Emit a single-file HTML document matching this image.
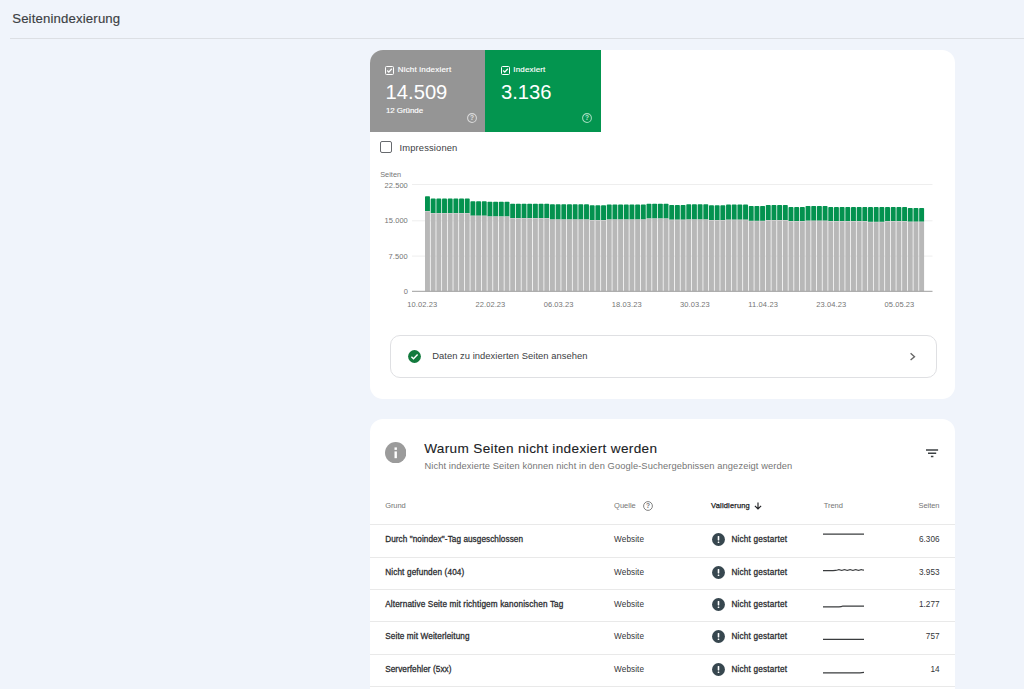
<!DOCTYPE html>
<html lang="de"><head><meta charset="utf-8"><title>Seitenindexierung</title>
<style>
html,body{margin:0;padding:0}
body{width:1024px;height:689px;overflow:hidden;background:#f0f4fb;font-family:"Liberation Sans",sans-serif;position:relative;color:#202124}
div,svg{position:absolute}
.t{white-space:nowrap}
#hr{left:10px;top:38px;width:1014px;height:1px;background:#dcdfe4}
.card{background:#fff;border-radius:13px;left:370px;width:585px}
#c1{top:49.6px;height:349px}
#c2{top:418.8px;height:300px}
.tile{top:49.6px;height:82px}
#t1{left:370px;width:115.4px;background:#959595;border-top-left-radius:13px}
#t2{left:485.4px;width:115.6px;background:#03954f}
.rline{left:370px;width:585px;height:1px;background:#e9e9e9}
.excl{left:712px}
.trend{left:823.2px}
</style></head><body>
<div class="t" style="font-size:13.2px;line-height:13.2px;top:12.00px;color:#3c4043;left:12.20px;letter-spacing:0.151px;-webkit-text-stroke:0.15px #3c4043;">Seitenindexierung</div>
<div id="hr"></div>

<div class="card" id="c1"></div>
<div class="tile" id="t1"></div>
<div class="tile" id="t2"></div>

<svg style="left:385px;top:65.9px" width="9" height="9" viewBox="0 0 9 9"><rect x=".5" y=".5" width="8" height="8" rx="1" fill="none" stroke="#fff" stroke-width="1"/><path d="M2.2 4.5l1.6 1.6 3-3.3" fill="none" stroke="#fff" stroke-width="1.3"/></svg>
<div class="t" style="font-size:8px;line-height:8px;top:66.00px;color:#fff;left:397.70px;letter-spacing:0.201px;-webkit-text-stroke:0.15px #fff;">Nicht indexiert</div>
<div class="t" style="font-size:20.2px;line-height:20.2px;top:82.00px;color:#fff;left:385.60px;">14.509</div>
<div class="t" style="font-size:8px;line-height:8px;top:107.00px;color:#fff;left:385.90px;letter-spacing:-0.077px;-webkit-text-stroke:0.15px #fff;">12 Gründe</div>
<svg style="left:466.9px;top:112.9px" width="10" height="10" viewBox="0 0 10 10"><circle cx="5" cy="5" r="4.4" fill="none" stroke="#dadada" stroke-width="1.05"/><text x="5" y="7.4" font-size="6.6" text-anchor="middle" fill="#e2e2e2" font-weight="bold" font-family="Liberation Sans">?</text></svg>

<svg style="left:500.9px;top:65.9px" width="9" height="9" viewBox="0 0 9 9"><rect x=".5" y=".5" width="8" height="8" rx="1" fill="none" stroke="#fff" stroke-width="1"/><path d="M2.2 4.5l1.6 1.6 3-3.3" fill="none" stroke="#fff" stroke-width="1.3"/></svg>
<div class="t" style="font-size:8px;line-height:8px;top:66.00px;color:#fff;left:513.30px;letter-spacing:0.164px;-webkit-text-stroke:0.15px #fff;">Indexiert</div>
<div class="t" style="font-size:20.2px;line-height:20.2px;top:82.00px;color:#fff;left:501.00px;">3.136</div>
<svg style="left:582.4px;top:112.9px" width="10" height="10" viewBox="0 0 10 10"><circle cx="5" cy="5" r="4.4" fill="none" stroke="#a4dbbf" stroke-width="1.05"/><text x="5" y="7.4" font-size="6.6" text-anchor="middle" fill="#b9e4ce" font-weight="bold" font-family="Liberation Sans">?</text></svg>

<div style="left:380.2px;top:141.2px;width:9.7px;height:9.7px;border:1.5px solid #676a6e;border-radius:2px"></div>
<div class="t" style="font-size:9.4px;line-height:9.4px;top:143.00px;color:#3c4043;left:399.50px;letter-spacing:0.138px;">Impressionen</div>

<div class="t" style="font-size:7.3px;line-height:7.3px;top:171.00px;color:#757575;left:380.20px;letter-spacing:0.039px;">Seiten</div>
<div class="t" style="font-size:7.5px;line-height:7.5px;top:182.00px;color:#757575;left:384.60px;letter-spacing:0.049px;">22.500</div><div class="t" style="font-size:7.5px;line-height:7.5px;top:217.00px;color:#757575;left:384.60px;letter-spacing:0.049px;">15.000</div><div class="t" style="font-size:7.5px;line-height:7.5px;top:253.00px;color:#757575;left:388.50px;letter-spacing:0.130px;">7.500</div><div class="t" style="font-size:7.5px;line-height:7.5px;top:288.00px;color:#757575;left:403.63px;">0</div>

<svg style="left:0;top:0" width="1024" height="320" viewBox="0 0 1024 320">
<g stroke="#eeeeee" stroke-width="1"><path d="M412 184.5H932.5M412 220.8H932.5M412 256.1H932.5"/></g>
<rect x="425.00" y="211.0" width="4.93" height="80.3" fill="#b8b8b8"/>
<rect x="425.00" y="211.0" width="4.93" height=".7" fill="#d2d2d2"/>
<path d="M425.00 211.0V197.1q0-.8 .8-.8h3.33q.8 0 .8 .8V211.0z" fill="#03924f"/>
<rect x="430.68" y="212.9" width="4.93" height="78.4" fill="#b8b8b8"/>
<rect x="430.68" y="212.9" width="4.93" height=".7" fill="#d2d2d2"/>
<path d="M430.68 212.9V199.4q0-.8 .8-.8h3.33q.8 0 .8 .8V212.9z" fill="#03924f"/>
<rect x="436.36" y="212.9" width="4.93" height="78.4" fill="#b8b8b8"/>
<rect x="436.36" y="212.9" width="4.93" height=".7" fill="#d2d2d2"/>
<path d="M436.36 212.9V199.4q0-.8 .8-.8h3.33q.8 0 .8 .8V212.9z" fill="#03924f"/>
<rect x="442.04" y="212.9" width="4.93" height="78.4" fill="#b8b8b8"/>
<rect x="442.04" y="212.9" width="4.93" height=".7" fill="#d2d2d2"/>
<path d="M442.04 212.9V199.4q0-.8 .8-.8h3.33q.8 0 .8 .8V212.9z" fill="#03924f"/>
<rect x="447.72" y="212.9" width="4.93" height="78.4" fill="#b8b8b8"/>
<rect x="447.72" y="212.9" width="4.93" height=".7" fill="#d2d2d2"/>
<path d="M447.72 212.9V199.4q0-.8 .8-.8h3.33q.8 0 .8 .8V212.9z" fill="#03924f"/>
<rect x="453.40" y="212.9" width="4.93" height="78.4" fill="#b8b8b8"/>
<rect x="453.40" y="212.9" width="4.93" height=".7" fill="#d2d2d2"/>
<path d="M453.40 212.9V199.4q0-.8 .8-.8h3.33q.8 0 .8 .8V212.9z" fill="#03924f"/>
<rect x="459.08" y="212.9" width="4.93" height="78.4" fill="#b8b8b8"/>
<rect x="459.08" y="212.9" width="4.93" height=".7" fill="#d2d2d2"/>
<path d="M459.08 212.9V199.4q0-.8 .8-.8h3.33q.8 0 .8 .8V212.9z" fill="#03924f"/>
<rect x="464.76" y="212.9" width="4.93" height="78.4" fill="#b8b8b8"/>
<rect x="464.76" y="212.9" width="4.93" height=".7" fill="#d2d2d2"/>
<path d="M464.76 212.9V199.4q0-.8 .8-.8h3.33q.8 0 .8 .8V212.9z" fill="#03924f"/>
<rect x="470.44" y="215.4" width="4.93" height="75.9" fill="#b8b8b8"/>
<rect x="470.44" y="215.4" width="4.93" height=".7" fill="#d2d2d2"/>
<path d="M470.44 215.4V202.0q0-.8 .8-.8h3.33q.8 0 .8 .8V215.4z" fill="#03924f"/>
<rect x="476.12" y="215.4" width="4.93" height="75.9" fill="#b8b8b8"/>
<rect x="476.12" y="215.4" width="4.93" height=".7" fill="#d2d2d2"/>
<path d="M476.12 215.4V202.0q0-.8 .8-.8h3.33q.8 0 .8 .8V215.4z" fill="#03924f"/>
<rect x="481.80" y="215.4" width="4.93" height="75.9" fill="#b8b8b8"/>
<rect x="481.80" y="215.4" width="4.93" height=".7" fill="#d2d2d2"/>
<path d="M481.80 215.4V202.0q0-.8 .8-.8h3.33q.8 0 .8 .8V215.4z" fill="#03924f"/>
<rect x="487.48" y="216.3" width="4.93" height="75.0" fill="#b8b8b8"/>
<rect x="487.48" y="216.3" width="4.93" height=".7" fill="#d2d2d2"/>
<path d="M487.48 216.3V202.6q0-.8 .8-.8h3.33q.8 0 .8 .8V216.3z" fill="#03924f"/>
<rect x="493.16" y="216.3" width="4.93" height="75.0" fill="#b8b8b8"/>
<rect x="493.16" y="216.3" width="4.93" height=".7" fill="#d2d2d2"/>
<path d="M493.16 216.3V202.6q0-.8 .8-.8h3.33q.8 0 .8 .8V216.3z" fill="#03924f"/>
<rect x="498.84" y="216.3" width="4.93" height="75.0" fill="#b8b8b8"/>
<rect x="498.84" y="216.3" width="4.93" height=".7" fill="#d2d2d2"/>
<path d="M498.84 216.3V202.6q0-.8 .8-.8h3.33q.8 0 .8 .8V216.3z" fill="#03924f"/>
<rect x="504.52" y="216.3" width="4.93" height="75.0" fill="#b8b8b8"/>
<rect x="504.52" y="216.3" width="4.93" height=".7" fill="#d2d2d2"/>
<path d="M504.52 216.3V202.6q0-.8 .8-.8h3.33q.8 0 .8 .8V216.3z" fill="#03924f"/>
<rect x="510.20" y="217.9" width="4.93" height="73.4" fill="#b8b8b8"/>
<rect x="510.20" y="217.9" width="4.93" height=".7" fill="#d2d2d2"/>
<path d="M510.20 217.9V204.5q0-.8 .8-.8h3.33q.8 0 .8 .8V217.9z" fill="#03924f"/>
<rect x="515.88" y="217.9" width="4.93" height="73.4" fill="#b8b8b8"/>
<rect x="515.88" y="217.9" width="4.93" height=".7" fill="#d2d2d2"/>
<path d="M515.88 217.9V204.5q0-.8 .8-.8h3.33q.8 0 .8 .8V217.9z" fill="#03924f"/>
<rect x="521.56" y="217.9" width="4.93" height="73.4" fill="#b8b8b8"/>
<rect x="521.56" y="217.9" width="4.93" height=".7" fill="#d2d2d2"/>
<path d="M521.56 217.9V204.5q0-.8 .8-.8h3.33q.8 0 .8 .8V217.9z" fill="#03924f"/>
<rect x="527.24" y="217.9" width="4.93" height="73.4" fill="#b8b8b8"/>
<rect x="527.24" y="217.9" width="4.93" height=".7" fill="#d2d2d2"/>
<path d="M527.24 217.9V204.5q0-.8 .8-.8h3.33q.8 0 .8 .8V217.9z" fill="#03924f"/>
<rect x="532.92" y="217.9" width="4.93" height="73.4" fill="#b8b8b8"/>
<rect x="532.92" y="217.9" width="4.93" height=".7" fill="#d2d2d2"/>
<path d="M532.92 217.9V204.5q0-.8 .8-.8h3.33q.8 0 .8 .8V217.9z" fill="#03924f"/>
<rect x="538.60" y="217.9" width="4.93" height="73.4" fill="#b8b8b8"/>
<rect x="538.60" y="217.9" width="4.93" height=".7" fill="#d2d2d2"/>
<path d="M538.60 217.9V204.5q0-.8 .8-.8h3.33q.8 0 .8 .8V217.9z" fill="#03924f"/>
<rect x="544.28" y="217.9" width="4.93" height="73.4" fill="#b8b8b8"/>
<rect x="544.28" y="217.9" width="4.93" height=".7" fill="#d2d2d2"/>
<path d="M544.28 217.9V204.5q0-.8 .8-.8h3.33q.8 0 .8 .8V217.9z" fill="#03924f"/>
<rect x="549.96" y="219.2" width="4.93" height="72.1" fill="#b8b8b8"/>
<rect x="549.96" y="219.2" width="4.93" height=".7" fill="#d2d2d2"/>
<path d="M549.96 219.2V205.1q0-.8 .8-.8h3.33q.8 0 .8 .8V219.2z" fill="#03924f"/>
<rect x="555.64" y="219.2" width="4.93" height="72.1" fill="#b8b8b8"/>
<rect x="555.64" y="219.2" width="4.93" height=".7" fill="#d2d2d2"/>
<path d="M555.64 219.2V205.1q0-.8 .8-.8h3.33q.8 0 .8 .8V219.2z" fill="#03924f"/>
<rect x="561.32" y="219.2" width="4.93" height="72.1" fill="#b8b8b8"/>
<rect x="561.32" y="219.2" width="4.93" height=".7" fill="#d2d2d2"/>
<path d="M561.32 219.2V205.1q0-.8 .8-.8h3.33q.8 0 .8 .8V219.2z" fill="#03924f"/>
<rect x="567.00" y="219.2" width="4.93" height="72.1" fill="#b8b8b8"/>
<rect x="567.00" y="219.2" width="4.93" height=".7" fill="#d2d2d2"/>
<path d="M567.00 219.2V205.1q0-.8 .8-.8h3.33q.8 0 .8 .8V219.2z" fill="#03924f"/>
<rect x="572.68" y="219.2" width="4.93" height="72.1" fill="#b8b8b8"/>
<rect x="572.68" y="219.2" width="4.93" height=".7" fill="#d2d2d2"/>
<path d="M572.68 219.2V205.1q0-.8 .8-.8h3.33q.8 0 .8 .8V219.2z" fill="#03924f"/>
<rect x="578.36" y="219.2" width="4.93" height="72.1" fill="#b8b8b8"/>
<rect x="578.36" y="219.2" width="4.93" height=".7" fill="#d2d2d2"/>
<path d="M578.36 219.2V205.1q0-.8 .8-.8h3.33q.8 0 .8 .8V219.2z" fill="#03924f"/>
<rect x="584.04" y="219.2" width="4.93" height="72.1" fill="#b8b8b8"/>
<rect x="584.04" y="219.2" width="4.93" height=".7" fill="#d2d2d2"/>
<path d="M584.04 219.2V205.1q0-.8 .8-.8h3.33q.8 0 .8 .8V219.2z" fill="#03924f"/>
<rect x="589.72" y="220.1" width="4.93" height="71.2" fill="#b8b8b8"/>
<rect x="589.72" y="220.1" width="4.93" height=".7" fill="#d2d2d2"/>
<path d="M589.72 220.1V206.0q0-.8 .8-.8h3.33q.8 0 .8 .8V220.1z" fill="#03924f"/>
<rect x="595.40" y="220.1" width="4.93" height="71.2" fill="#b8b8b8"/>
<rect x="595.40" y="220.1" width="4.93" height=".7" fill="#d2d2d2"/>
<path d="M595.40 220.1V206.0q0-.8 .8-.8h3.33q.8 0 .8 .8V220.1z" fill="#03924f"/>
<rect x="601.08" y="220.1" width="4.93" height="71.2" fill="#b8b8b8"/>
<rect x="601.08" y="220.1" width="4.93" height=".7" fill="#d2d2d2"/>
<path d="M601.08 220.1V206.0q0-.8 .8-.8h3.33q.8 0 .8 .8V220.1z" fill="#03924f"/>
<rect x="606.76" y="219.2" width="4.93" height="72.1" fill="#b8b8b8"/>
<rect x="606.76" y="219.2" width="4.93" height=".7" fill="#d2d2d2"/>
<path d="M606.76 219.2V205.4q0-.8 .8-.8h3.33q.8 0 .8 .8V219.2z" fill="#03924f"/>
<rect x="612.44" y="219.2" width="4.93" height="72.1" fill="#b8b8b8"/>
<rect x="612.44" y="219.2" width="4.93" height=".7" fill="#d2d2d2"/>
<path d="M612.44 219.2V205.4q0-.8 .8-.8h3.33q.8 0 .8 .8V219.2z" fill="#03924f"/>
<rect x="618.12" y="219.2" width="4.93" height="72.1" fill="#b8b8b8"/>
<rect x="618.12" y="219.2" width="4.93" height=".7" fill="#d2d2d2"/>
<path d="M618.12 219.2V205.4q0-.8 .8-.8h3.33q.8 0 .8 .8V219.2z" fill="#03924f"/>
<rect x="623.80" y="219.2" width="4.93" height="72.1" fill="#b8b8b8"/>
<rect x="623.80" y="219.2" width="4.93" height=".7" fill="#d2d2d2"/>
<path d="M623.80 219.2V205.4q0-.8 .8-.8h3.33q.8 0 .8 .8V219.2z" fill="#03924f"/>
<rect x="629.48" y="219.2" width="4.93" height="72.1" fill="#b8b8b8"/>
<rect x="629.48" y="219.2" width="4.93" height=".7" fill="#d2d2d2"/>
<path d="M629.48 219.2V205.4q0-.8 .8-.8h3.33q.8 0 .8 .8V219.2z" fill="#03924f"/>
<rect x="635.16" y="219.2" width="4.93" height="72.1" fill="#b8b8b8"/>
<rect x="635.16" y="219.2" width="4.93" height=".7" fill="#d2d2d2"/>
<path d="M635.16 219.2V205.4q0-.8 .8-.8h3.33q.8 0 .8 .8V219.2z" fill="#03924f"/>
<rect x="640.84" y="219.2" width="4.93" height="72.1" fill="#b8b8b8"/>
<rect x="640.84" y="219.2" width="4.93" height=".7" fill="#d2d2d2"/>
<path d="M640.84 219.2V205.4q0-.8 .8-.8h3.33q.8 0 .8 .8V219.2z" fill="#03924f"/>
<rect x="646.52" y="218.2" width="4.93" height="73.1" fill="#b8b8b8"/>
<rect x="646.52" y="218.2" width="4.93" height=".7" fill="#d2d2d2"/>
<path d="M646.52 218.2V204.5q0-.8 .8-.8h3.33q.8 0 .8 .8V218.2z" fill="#03924f"/>
<rect x="652.20" y="218.2" width="4.93" height="73.1" fill="#b8b8b8"/>
<rect x="652.20" y="218.2" width="4.93" height=".7" fill="#d2d2d2"/>
<path d="M652.20 218.2V204.5q0-.8 .8-.8h3.33q.8 0 .8 .8V218.2z" fill="#03924f"/>
<rect x="657.88" y="218.2" width="4.93" height="73.1" fill="#b8b8b8"/>
<rect x="657.88" y="218.2" width="4.93" height=".7" fill="#d2d2d2"/>
<path d="M657.88 218.2V204.5q0-.8 .8-.8h3.33q.8 0 .8 .8V218.2z" fill="#03924f"/>
<rect x="663.56" y="218.2" width="4.93" height="73.1" fill="#b8b8b8"/>
<rect x="663.56" y="218.2" width="4.93" height=".7" fill="#d2d2d2"/>
<path d="M663.56 218.2V204.5q0-.8 .8-.8h3.33q.8 0 .8 .8V218.2z" fill="#03924f"/>
<rect x="669.24" y="219.5" width="4.93" height="71.8" fill="#b8b8b8"/>
<rect x="669.24" y="219.5" width="4.93" height=".7" fill="#d2d2d2"/>
<path d="M669.24 219.5V205.8q0-.8 .8-.8h3.33q.8 0 .8 .8V219.5z" fill="#03924f"/>
<rect x="674.92" y="219.5" width="4.93" height="71.8" fill="#b8b8b8"/>
<rect x="674.92" y="219.5" width="4.93" height=".7" fill="#d2d2d2"/>
<path d="M674.92 219.5V205.8q0-.8 .8-.8h3.33q.8 0 .8 .8V219.5z" fill="#03924f"/>
<rect x="680.60" y="219.5" width="4.93" height="71.8" fill="#b8b8b8"/>
<rect x="680.60" y="219.5" width="4.93" height=".7" fill="#d2d2d2"/>
<path d="M680.60 219.5V205.8q0-.8 .8-.8h3.33q.8 0 .8 .8V219.5z" fill="#03924f"/>
<rect x="686.28" y="219.2" width="4.93" height="72.1" fill="#b8b8b8"/>
<rect x="686.28" y="219.2" width="4.93" height=".7" fill="#d2d2d2"/>
<path d="M686.28 219.2V205.0q0-.8 .8-.8h3.33q.8 0 .8 .8V219.2z" fill="#03924f"/>
<rect x="691.96" y="219.2" width="4.93" height="72.1" fill="#b8b8b8"/>
<rect x="691.96" y="219.2" width="4.93" height=".7" fill="#d2d2d2"/>
<path d="M691.96 219.2V205.0q0-.8 .8-.8h3.33q.8 0 .8 .8V219.2z" fill="#03924f"/>
<rect x="697.64" y="219.2" width="4.93" height="72.1" fill="#b8b8b8"/>
<rect x="697.64" y="219.2" width="4.93" height=".7" fill="#d2d2d2"/>
<path d="M697.64 219.2V205.0q0-.8 .8-.8h3.33q.8 0 .8 .8V219.2z" fill="#03924f"/>
<rect x="703.32" y="219.2" width="4.93" height="72.1" fill="#b8b8b8"/>
<rect x="703.32" y="219.2" width="4.93" height=".7" fill="#d2d2d2"/>
<path d="M703.32 219.2V205.0q0-.8 .8-.8h3.33q.8 0 .8 .8V219.2z" fill="#03924f"/>
<rect x="709.00" y="220.1" width="4.93" height="71.2" fill="#b8b8b8"/>
<rect x="709.00" y="220.1" width="4.93" height=".7" fill="#d2d2d2"/>
<path d="M709.00 220.1V206.0q0-.8 .8-.8h3.33q.8 0 .8 .8V220.1z" fill="#03924f"/>
<rect x="714.68" y="220.1" width="4.93" height="71.2" fill="#b8b8b8"/>
<rect x="714.68" y="220.1" width="4.93" height=".7" fill="#d2d2d2"/>
<path d="M714.68 220.1V206.0q0-.8 .8-.8h3.33q.8 0 .8 .8V220.1z" fill="#03924f"/>
<rect x="720.36" y="220.1" width="4.93" height="71.2" fill="#b8b8b8"/>
<rect x="720.36" y="220.1" width="4.93" height=".7" fill="#d2d2d2"/>
<path d="M720.36 220.1V206.0q0-.8 .8-.8h3.33q.8 0 .8 .8V220.1z" fill="#03924f"/>
<rect x="726.04" y="219.5" width="4.93" height="71.8" fill="#b8b8b8"/>
<rect x="726.04" y="219.5" width="4.93" height=".7" fill="#d2d2d2"/>
<path d="M726.04 219.5V205.4q0-.8 .8-.8h3.33q.8 0 .8 .8V219.5z" fill="#03924f"/>
<rect x="731.72" y="219.5" width="4.93" height="71.8" fill="#b8b8b8"/>
<rect x="731.72" y="219.5" width="4.93" height=".7" fill="#d2d2d2"/>
<path d="M731.72 219.5V205.4q0-.8 .8-.8h3.33q.8 0 .8 .8V219.5z" fill="#03924f"/>
<rect x="737.40" y="219.5" width="4.93" height="71.8" fill="#b8b8b8"/>
<rect x="737.40" y="219.5" width="4.93" height=".7" fill="#d2d2d2"/>
<path d="M737.40 219.5V205.4q0-.8 .8-.8h3.33q.8 0 .8 .8V219.5z" fill="#03924f"/>
<rect x="743.08" y="219.5" width="4.93" height="71.8" fill="#b8b8b8"/>
<rect x="743.08" y="219.5" width="4.93" height=".7" fill="#d2d2d2"/>
<path d="M743.08 219.5V205.4q0-.8 .8-.8h3.33q.8 0 .8 .8V219.5z" fill="#03924f"/>
<rect x="748.76" y="220.7" width="4.93" height="70.6" fill="#b8b8b8"/>
<rect x="748.76" y="220.7" width="4.93" height=".7" fill="#d2d2d2"/>
<path d="M748.76 220.7V206.7q0-.8 .8-.8h3.33q.8 0 .8 .8V220.7z" fill="#03924f"/>
<rect x="754.44" y="220.7" width="4.93" height="70.6" fill="#b8b8b8"/>
<rect x="754.44" y="220.7" width="4.93" height=".7" fill="#d2d2d2"/>
<path d="M754.44 220.7V206.7q0-.8 .8-.8h3.33q.8 0 .8 .8V220.7z" fill="#03924f"/>
<rect x="760.12" y="220.7" width="4.93" height="70.6" fill="#b8b8b8"/>
<rect x="760.12" y="220.7" width="4.93" height=".7" fill="#d2d2d2"/>
<path d="M760.12 220.7V206.7q0-.8 .8-.8h3.33q.8 0 .8 .8V220.7z" fill="#03924f"/>
<rect x="765.80" y="220.1" width="4.93" height="71.2" fill="#b8b8b8"/>
<rect x="765.80" y="220.1" width="4.93" height=".7" fill="#d2d2d2"/>
<path d="M765.80 220.1V205.8q0-.8 .8-.8h3.33q.8 0 .8 .8V220.1z" fill="#03924f"/>
<rect x="771.48" y="220.1" width="4.93" height="71.2" fill="#b8b8b8"/>
<rect x="771.48" y="220.1" width="4.93" height=".7" fill="#d2d2d2"/>
<path d="M771.48 220.1V205.8q0-.8 .8-.8h3.33q.8 0 .8 .8V220.1z" fill="#03924f"/>
<rect x="777.16" y="220.1" width="4.93" height="71.2" fill="#b8b8b8"/>
<rect x="777.16" y="220.1" width="4.93" height=".7" fill="#d2d2d2"/>
<path d="M777.16 220.1V205.8q0-.8 .8-.8h3.33q.8 0 .8 .8V220.1z" fill="#03924f"/>
<rect x="782.84" y="220.1" width="4.93" height="71.2" fill="#b8b8b8"/>
<rect x="782.84" y="220.1" width="4.93" height=".7" fill="#d2d2d2"/>
<path d="M782.84 220.1V205.8q0-.8 .8-.8h3.33q.8 0 .8 .8V220.1z" fill="#03924f"/>
<rect x="788.52" y="221.1" width="4.93" height="70.2" fill="#b8b8b8"/>
<rect x="788.52" y="221.1" width="4.93" height=".7" fill="#d2d2d2"/>
<path d="M788.52 221.1V207.9q0-.8 .8-.8h3.33q.8 0 .8 .8V221.1z" fill="#03924f"/>
<rect x="794.20" y="221.1" width="4.93" height="70.2" fill="#b8b8b8"/>
<rect x="794.20" y="221.1" width="4.93" height=".7" fill="#d2d2d2"/>
<path d="M794.20 221.1V207.9q0-.8 .8-.8h3.33q.8 0 .8 .8V221.1z" fill="#03924f"/>
<rect x="799.88" y="221.1" width="4.93" height="70.2" fill="#b8b8b8"/>
<rect x="799.88" y="221.1" width="4.93" height=".7" fill="#d2d2d2"/>
<path d="M799.88 221.1V207.9q0-.8 .8-.8h3.33q.8 0 .8 .8V221.1z" fill="#03924f"/>
<rect x="805.56" y="220.5" width="4.93" height="70.8" fill="#b8b8b8"/>
<rect x="805.56" y="220.5" width="4.93" height=".7" fill="#d2d2d2"/>
<path d="M805.56 220.5V206.7q0-.8 .8-.8h3.33q.8 0 .8 .8V220.5z" fill="#03924f"/>
<rect x="811.24" y="220.5" width="4.93" height="70.8" fill="#b8b8b8"/>
<rect x="811.24" y="220.5" width="4.93" height=".7" fill="#d2d2d2"/>
<path d="M811.24 220.5V206.7q0-.8 .8-.8h3.33q.8 0 .8 .8V220.5z" fill="#03924f"/>
<rect x="816.92" y="220.5" width="4.93" height="70.8" fill="#b8b8b8"/>
<rect x="816.92" y="220.5" width="4.93" height=".7" fill="#d2d2d2"/>
<path d="M816.92 220.5V206.7q0-.8 .8-.8h3.33q.8 0 .8 .8V220.5z" fill="#03924f"/>
<rect x="822.60" y="220.5" width="4.93" height="70.8" fill="#b8b8b8"/>
<rect x="822.60" y="220.5" width="4.93" height=".7" fill="#d2d2d2"/>
<path d="M822.60 220.5V206.7q0-.8 .8-.8h3.33q.8 0 .8 .8V220.5z" fill="#03924f"/>
<rect x="828.28" y="221.1" width="4.93" height="70.2" fill="#b8b8b8"/>
<rect x="828.28" y="221.1" width="4.93" height=".7" fill="#d2d2d2"/>
<path d="M828.28 221.1V207.9q0-.8 .8-.8h3.33q.8 0 .8 .8V221.1z" fill="#03924f"/>
<rect x="833.96" y="221.1" width="4.93" height="70.2" fill="#b8b8b8"/>
<rect x="833.96" y="221.1" width="4.93" height=".7" fill="#d2d2d2"/>
<path d="M833.96 221.1V207.9q0-.8 .8-.8h3.33q.8 0 .8 .8V221.1z" fill="#03924f"/>
<rect x="839.64" y="221.1" width="4.93" height="70.2" fill="#b8b8b8"/>
<rect x="839.64" y="221.1" width="4.93" height=".7" fill="#d2d2d2"/>
<path d="M839.64 221.1V207.9q0-.8 .8-.8h3.33q.8 0 .8 .8V221.1z" fill="#03924f"/>
<rect x="845.32" y="221.1" width="4.93" height="70.2" fill="#b8b8b8"/>
<rect x="845.32" y="221.1" width="4.93" height=".7" fill="#d2d2d2"/>
<path d="M845.32 221.1V207.9q0-.8 .8-.8h3.33q.8 0 .8 .8V221.1z" fill="#03924f"/>
<rect x="851.00" y="221.1" width="4.93" height="70.2" fill="#b8b8b8"/>
<rect x="851.00" y="221.1" width="4.93" height=".7" fill="#d2d2d2"/>
<path d="M851.00 221.1V207.9q0-.8 .8-.8h3.33q.8 0 .8 .8V221.1z" fill="#03924f"/>
<rect x="856.68" y="221.1" width="4.93" height="70.2" fill="#b8b8b8"/>
<rect x="856.68" y="221.1" width="4.93" height=".7" fill="#d2d2d2"/>
<path d="M856.68 221.1V207.9q0-.8 .8-.8h3.33q.8 0 .8 .8V221.1z" fill="#03924f"/>
<rect x="862.36" y="221.1" width="4.93" height="70.2" fill="#b8b8b8"/>
<rect x="862.36" y="221.1" width="4.93" height=".7" fill="#d2d2d2"/>
<path d="M862.36 221.1V207.9q0-.8 .8-.8h3.33q.8 0 .8 .8V221.1z" fill="#03924f"/>
<rect x="868.04" y="221.7" width="4.93" height="69.6" fill="#b8b8b8"/>
<rect x="868.04" y="221.7" width="4.93" height=".7" fill="#d2d2d2"/>
<path d="M868.04 221.7V207.9q0-.8 .8-.8h3.33q.8 0 .8 .8V221.7z" fill="#03924f"/>
<rect x="873.72" y="221.7" width="4.93" height="69.6" fill="#b8b8b8"/>
<rect x="873.72" y="221.7" width="4.93" height=".7" fill="#d2d2d2"/>
<path d="M873.72 221.7V207.9q0-.8 .8-.8h3.33q.8 0 .8 .8V221.7z" fill="#03924f"/>
<rect x="879.40" y="221.7" width="4.93" height="69.6" fill="#b8b8b8"/>
<rect x="879.40" y="221.7" width="4.93" height=".7" fill="#d2d2d2"/>
<path d="M879.40 221.7V207.9q0-.8 .8-.8h3.33q.8 0 .8 .8V221.7z" fill="#03924f"/>
<rect x="885.08" y="221.1" width="4.93" height="70.2" fill="#b8b8b8"/>
<rect x="885.08" y="221.1" width="4.93" height=".7" fill="#d2d2d2"/>
<path d="M885.08 221.1V207.9q0-.8 .8-.8h3.33q.8 0 .8 .8V221.1z" fill="#03924f"/>
<rect x="890.76" y="221.1" width="4.93" height="70.2" fill="#b8b8b8"/>
<rect x="890.76" y="221.1" width="4.93" height=".7" fill="#d2d2d2"/>
<path d="M890.76 221.1V207.9q0-.8 .8-.8h3.33q.8 0 .8 .8V221.1z" fill="#03924f"/>
<rect x="896.44" y="221.1" width="4.93" height="70.2" fill="#b8b8b8"/>
<rect x="896.44" y="221.1" width="4.93" height=".7" fill="#d2d2d2"/>
<path d="M896.44 221.1V207.9q0-.8 .8-.8h3.33q.8 0 .8 .8V221.1z" fill="#03924f"/>
<rect x="902.12" y="221.1" width="4.93" height="70.2" fill="#b8b8b8"/>
<rect x="902.12" y="221.1" width="4.93" height=".7" fill="#d2d2d2"/>
<path d="M902.12 221.1V207.9q0-.8 .8-.8h3.33q.8 0 .8 .8V221.1z" fill="#03924f"/>
<rect x="907.80" y="221.5" width="4.93" height="69.8" fill="#b8b8b8"/>
<rect x="907.80" y="221.5" width="4.93" height=".7" fill="#d2d2d2"/>
<path d="M907.80 221.5V208.7q0-.8 .8-.8h3.33q.8 0 .8 .8V221.5z" fill="#03924f"/>
<rect x="913.48" y="221.5" width="4.93" height="69.8" fill="#b8b8b8"/>
<rect x="913.48" y="221.5" width="4.93" height=".7" fill="#d2d2d2"/>
<path d="M913.48 221.5V208.7q0-.8 .8-.8h3.33q.8 0 .8 .8V221.5z" fill="#03924f"/>
<rect x="919.16" y="221.5" width="4.93" height="69.8" fill="#b8b8b8"/>
<rect x="919.16" y="221.5" width="4.93" height=".7" fill="#d2d2d2"/>
<path d="M919.16 221.5V208.7q0-.8 .8-.8h3.33q.8 0 .8 .8V221.5z" fill="#03924f"/>
<path d="M412 291.3H932.5" stroke="#9e9e9e" stroke-width="1"/>
</svg>
<div class="t" style="font-size:7.5px;line-height:7.5px;top:301.00px;color:#757575;left:407.35px;letter-spacing:0.085px;">10.02.23</div><div class="t" style="font-size:7.5px;line-height:7.5px;top:301.00px;color:#757575;left:475.51px;letter-spacing:0.085px;">22.02.23</div><div class="t" style="font-size:7.5px;line-height:7.5px;top:301.00px;color:#757575;left:543.67px;letter-spacing:0.085px;">06.03.23</div><div class="t" style="font-size:7.5px;line-height:7.5px;top:301.00px;color:#757575;left:611.83px;letter-spacing:0.085px;">18.03.23</div><div class="t" style="font-size:7.5px;line-height:7.5px;top:301.00px;color:#757575;left:679.99px;letter-spacing:0.085px;">30.03.23</div><div class="t" style="font-size:7.5px;line-height:7.5px;top:301.00px;color:#757575;left:748.15px;letter-spacing:0.166px;">11.04.23</div><div class="t" style="font-size:7.5px;line-height:7.5px;top:301.00px;color:#757575;left:816.31px;letter-spacing:0.085px;">23.04.23</div><div class="t" style="font-size:7.5px;line-height:7.5px;top:301.00px;color:#757575;left:884.47px;letter-spacing:0.085px;">05.05.23</div>

<div style="left:390px;top:335.2px;width:544.6px;height:41.2px;border:1px solid #dfe0e3;border-radius:10px;box-sizing:content-box"></div>
<svg style="left:407.7px;top:349.7px" width="13" height="13" viewBox="0 0 13 13"><circle cx="6.5" cy="6.5" r="6.4" fill="#127a3d"/><path d="M3.4 6.7l2.1 2.1 4.1-4.3" fill="none" stroke="#fff" stroke-width="1.4"/></svg>
<div class="t" style="font-size:9.4px;line-height:9.4px;top:351.00px;color:#3c4043;left:432.20px;letter-spacing:0.045px;">Daten zu indexierten Seiten ansehen</div>
<svg style="left:908.6px;top:352px" width="9" height="10" viewBox="0 0 9 10"><path d="M1.6 1.3l3.9 3.4-3.9 3.4" fill="none" stroke="#666" stroke-width="1.35"/></svg>

<div class="card" id="c2"></div>
<svg style="left:384.8px;top:441.7px" width="21.4" height="21.4" viewBox="0 0 21.4 21.4"><circle cx="10.7" cy="10.7" r="10.7" fill="#9b9b9b"/><rect x="9.5" y="9.4" width="2.4" height="6.8" fill="#fff"/><rect x="9.5" y="5.4" width="2.4" height="2.5" fill="#fff"/></svg>
<div class="t" style="font-size:13.6px;line-height:13.6px;top:442.00px;color:#202124;left:424.20px;letter-spacing:0.331px;-webkit-text-stroke:0.1px #202124;">Warum Seiten nicht indexiert werden</div>
<div class="t" style="font-size:9.3px;line-height:9.3px;top:462.00px;color:#757575;left:424.50px;letter-spacing:0.097px;">Nicht indexierte Seiten können nicht in den Google-Suchergebnissen angezeigt werden</div>
<svg style="left:925px;top:448px" width="14" height="10" viewBox="0 0 14 10"><path d="M1 1.9H13.1M3 5.2H11.2M5.9 8.5H8.4" stroke="#3c4043" stroke-width="1.5" fill="none"/></svg>

<div class="t" style="font-size:7.5px;line-height:7.5px;top:502.00px;color:#757575;left:385.20px;letter-spacing:-0.090px;">Grund</div>
<div class="t" style="font-size:7.5px;line-height:7.5px;top:502.00px;color:#757575;left:614.10px;">Quelle</div>
<svg style="left:643px;top:500.6px" width="10" height="10" viewBox="0 0 10 10"><circle cx="5" cy="5" r="4.4" fill="none" stroke="#757575" stroke-width="0.9"/><text x="5" y="7.4" font-size="6.6" text-anchor="middle" fill="#757575" font-weight="bold" font-family="Liberation Sans">?</text></svg>
<div class="t" style="font-size:7.5px;line-height:7.5px;top:502.00px;color:#202124;left:711.10px;letter-spacing:0.172px;-webkit-text-stroke:0.25px #202124;">Validierung</div>
<svg style="left:754.4px;top:502.3px" width="8" height="8" viewBox="0 0 8 8"><path d="M4 .6V6.8M.9 3.9L4 7 7.1 3.9" fill="none" stroke="#202124" stroke-width="1.15"/></svg>
<div class="t" style="font-size:7.5px;line-height:7.5px;top:502.00px;color:#757575;left:823.70px;letter-spacing:-0.032px;">Trend</div>
<div class="t" style="font-size:7.5px;line-height:7.5px;top:502.00px;color:#757575;left:918.60px;letter-spacing:-0.076px;">Seiten</div>
<div class="rline" style="top:524.1px"></div>

<div class="rline" style="top:556.5px"></div>
<div class="t" style="font-size:8.2px;line-height:8.2px;top:536.00px;color:#2b2d30;left:385.20px;letter-spacing:0.069px;-webkit-text-stroke:0.28px #2b2d30;">Durch &quot;noindex&quot;-Tag ausgeschlossen</div>
<div class="t" style="font-size:8.2px;line-height:8.2px;top:536.00px;color:#333538;left:614.10px;letter-spacing:0.077px;">Website</div>
<svg class="excl" style="top:533.1px" width="13" height="13" viewBox="0 0 13 13"><circle cx="6.5" cy="6.5" r="6.45" fill="#37474f"/><rect x="5.7" y="2.9" width="1.6" height="4.6" rx=".4" fill="#fff"/><rect x="5.7" y="8.5" width="1.6" height="1.6" rx=".5" fill="#fff"/></svg>
<div class="t" style="font-size:8.2px;line-height:8.2px;top:536.00px;color:#2b2d30;left:731.40px;letter-spacing:0.200px;-webkit-text-stroke:0.28px #2b2d30;">Nicht gestartet</div>
<svg class="trend" style="top:532.0px" width="42" height="12" viewBox="0 0 42 12"><path d="M0 2H41" fill="none" stroke="#3a3c3e" stroke-width="1.25"/></svg>
<div class="t" style="font-size:8.2px;line-height:8.2px;top:536.00px;color:#333538;left:919.00px;">6.306</div>
<div class="rline" style="top:589.0px"></div>
<div class="t" style="font-size:8.2px;line-height:8.2px;top:569.00px;color:#2b2d30;left:385.20px;letter-spacing:0.138px;-webkit-text-stroke:0.28px #2b2d30;">Nicht gefunden (404)</div>
<div class="t" style="font-size:8.2px;line-height:8.2px;top:569.00px;color:#333538;left:614.10px;letter-spacing:0.077px;">Website</div>
<svg class="excl" style="top:565.5px" width="13" height="13" viewBox="0 0 13 13"><circle cx="6.5" cy="6.5" r="6.45" fill="#37474f"/><rect x="5.7" y="2.9" width="1.6" height="4.6" rx=".4" fill="#fff"/><rect x="5.7" y="8.5" width="1.6" height="1.6" rx=".5" fill="#fff"/></svg>
<div class="t" style="font-size:8.2px;line-height:8.2px;top:569.00px;color:#2b2d30;left:731.40px;letter-spacing:0.200px;-webkit-text-stroke:0.28px #2b2d30;">Nicht gestartet</div>
<svg class="trend" style="top:564.4px" width="42" height="12" viewBox="0 0 42 12"><path d="M0 6.5H10q3 0 4.5-.5q1.4-.8 2.8 0t2.8 0t2.8 0t2.8 0t2.8 0t2.8 0t2.8 0t2.8 0t2.8 0l1.3.2" fill="none" stroke="#3a3c3e" stroke-width="1.25"/></svg>
<div class="t" style="font-size:8.2px;line-height:8.2px;top:569.00px;color:#333538;left:919.00px;">3.953</div>
<div class="rline" style="top:621.4px"></div>
<div class="t" style="font-size:8.2px;line-height:8.2px;top:601.00px;color:#2b2d30;left:385.20px;letter-spacing:0.137px;-webkit-text-stroke:0.28px #2b2d30;">Alternative Seite mit richtigem kanonischen Tag</div>
<div class="t" style="font-size:8.2px;line-height:8.2px;top:601.00px;color:#333538;left:614.10px;letter-spacing:0.077px;">Website</div>
<svg class="excl" style="top:598.0px" width="13" height="13" viewBox="0 0 13 13"><circle cx="6.5" cy="6.5" r="6.45" fill="#37474f"/><rect x="5.7" y="2.9" width="1.6" height="4.6" rx=".4" fill="#fff"/><rect x="5.7" y="8.5" width="1.6" height="1.6" rx=".5" fill="#fff"/></svg>
<div class="t" style="font-size:8.2px;line-height:8.2px;top:601.00px;color:#2b2d30;left:731.40px;letter-spacing:0.200px;-webkit-text-stroke:0.28px #2b2d30;">Nicht gestartet</div>
<svg class="trend" style="top:596.9px" width="42" height="12" viewBox="0 0 42 12"><path d="M0 9.8H15q3 .2 5-.8H41" fill="none" stroke="#3a3c3e" stroke-width="1.25"/></svg>
<div class="t" style="font-size:8.2px;line-height:8.2px;top:601.00px;color:#333538;left:919.00px;">1.277</div>
<div class="rline" style="top:653.9px"></div>
<div class="t" style="font-size:8.2px;line-height:8.2px;top:633.00px;color:#2b2d30;left:385.20px;letter-spacing:0.120px;-webkit-text-stroke:0.28px #2b2d30;">Seite mit Weiterleitung</div>
<div class="t" style="font-size:8.2px;line-height:8.2px;top:633.00px;color:#333538;left:614.10px;letter-spacing:0.077px;">Website</div>
<svg class="excl" style="top:630.4px" width="13" height="13" viewBox="0 0 13 13"><circle cx="6.5" cy="6.5" r="6.45" fill="#37474f"/><rect x="5.7" y="2.9" width="1.6" height="4.6" rx=".4" fill="#fff"/><rect x="5.7" y="8.5" width="1.6" height="1.6" rx=".5" fill="#fff"/></svg>
<div class="t" style="font-size:8.2px;line-height:8.2px;top:633.00px;color:#2b2d30;left:731.40px;letter-spacing:0.200px;-webkit-text-stroke:0.28px #2b2d30;">Nicht gestartet</div>
<svg class="trend" style="top:629.3px" width="42" height="12" viewBox="0 0 42 12"><path d="M0 10.3H41" fill="none" stroke="#3a3c3e" stroke-width="1.25"/></svg>
<div class="t" style="font-size:8.2px;line-height:8.2px;top:633.00px;color:#333538;left:925.83px;">757</div>
<div class="rline" style="top:686.3px"></div>
<div class="t" style="font-size:8.2px;line-height:8.2px;top:666.00px;color:#2b2d30;left:385.20px;letter-spacing:0.072px;-webkit-text-stroke:0.28px #2b2d30;">Serverfehler (5xx)</div>
<div class="t" style="font-size:8.2px;line-height:8.2px;top:666.00px;color:#333538;left:614.10px;letter-spacing:0.077px;">Website</div>
<svg class="excl" style="top:662.9px" width="13" height="13" viewBox="0 0 13 13"><circle cx="6.5" cy="6.5" r="6.45" fill="#37474f"/><rect x="5.7" y="2.9" width="1.6" height="4.6" rx=".4" fill="#fff"/><rect x="5.7" y="8.5" width="1.6" height="1.6" rx=".5" fill="#fff"/></svg>
<div class="t" style="font-size:8.2px;line-height:8.2px;top:666.00px;color:#2b2d30;left:731.40px;letter-spacing:0.200px;-webkit-text-stroke:0.28px #2b2d30;">Nicht gestartet</div>
<svg class="trend" style="top:661.8px" width="42" height="12" viewBox="0 0 42 12"><path d="M0 10.8H37l4-.4" fill="none" stroke="#3a3c3e" stroke-width="1.25"/></svg>
<div class="t" style="font-size:8.2px;line-height:8.2px;top:666.00px;color:#333538;left:930.39px;">14</div>
</body></html>
